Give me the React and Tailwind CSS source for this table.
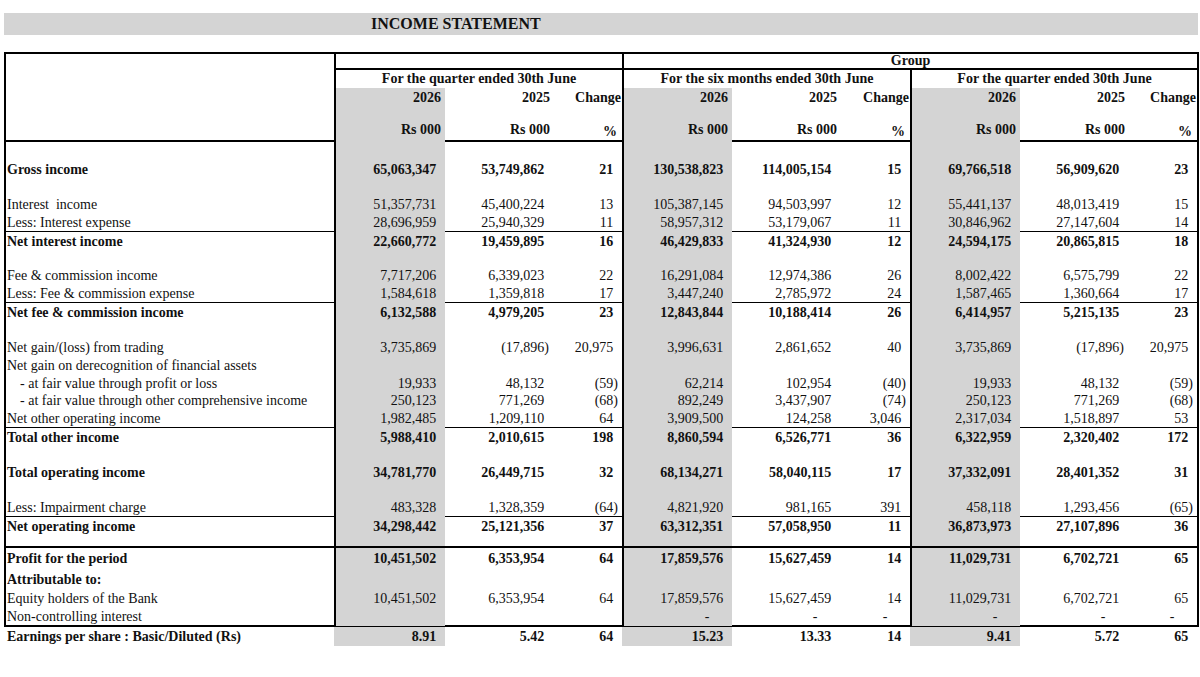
import React from "react";

const COLS =
  "grid grid-cols-[328px_111px_108px_69px_110px_108px_70px_110px_108px_69px]";

const rows = [
  { h: "h-[18px] leading-[18px]" },
  {
    h: "h-[18px] leading-[18px]",
    label: "Gross income",
    bold: true,
    v: ["65,063,347", "53,749,862", "21", "130,538,823", "114,005,154", "15", "69,766,518", "56,909,620", "23"],
  },
  { h: "h-[17px] leading-[17px]" },
  {
    h: "h-[18px] leading-[18px]",
    label: "Interest  income",
    v: ["51,357,731", "45,400,224", "13", "105,387,145", "94,503,997", "12", "55,441,137", "48,013,419", "15"],
  },
  {
    h: "h-[18px] leading-[18px]",
    label: "Less: Interest expense",
    v: ["28,696,959", "25,940,329", "11", "58,957,312", "53,179,067", "11", "30,846,962", "27,147,604", "14"],
  },
  {
    h: "h-[18px] leading-[17px]",
    line: "border-t border-black",
    label: "Net interest income",
    bold: true,
    v: ["22,660,772", "19,459,895", "16", "46,429,833", "41,324,930", "12", "24,594,175", "20,865,815", "18"],
  },
  { h: "h-[17px] leading-[17px]" },
  {
    h: "h-[18px] leading-[18px]",
    label: "Fee & commission income",
    v: ["7,717,206", "6,339,023", "22", "16,291,084", "12,974,386", "26", "8,002,422", "6,575,799", "22"],
  },
  {
    h: "h-[18px] leading-[18px]",
    label: "Less: Fee & commission expense",
    v: ["1,584,618", "1,359,818", "17", "3,447,240", "2,785,972", "24", "1,587,465", "1,360,664", "17"],
  },
  {
    h: "h-[19px] leading-[18px]",
    line: "border-t border-black",
    label: "Net fee & commission income",
    bold: true,
    v: ["6,132,588", "4,979,205", "23", "12,843,844", "10,188,414", "26", "6,414,957", "5,215,135", "23"],
  },
  { h: "h-[17px] leading-[17px]" },
  {
    h: "h-[18px] leading-[18px]",
    label: "Net gain/(loss) from trading",
    v: ["3,735,869", "(17,896)", "20,975", "3,996,631", "2,861,652", "40", "3,735,869", "(17,896)", "20,975"],
  },
  {
    h: "h-[18px] leading-[18px]",
    label: "Net gain on derecognition of financial assets",
  },
  {
    h: "h-[17px] leading-[17px]",
    label: "- at fair value through profit or loss",
    indent: true,
    v: ["19,933", "48,132", "(59)", "62,214", "102,954", "(40)", "19,933", "48,132", "(59)"],
  },
  {
    h: "h-[18px] leading-[18px]",
    label: "- at fair value through other comprehensive income",
    indent: true,
    v: ["250,123", "771,269", "(68)", "892,249", "3,437,907", "(74)", "250,123", "771,269", "(68)"],
  },
  {
    h: "h-[18px] leading-[18px]",
    label: "Net other operating income",
    v: ["1,982,485", "1,209,110", "64", "3,909,500", "124,258", "3,046", "2,317,034", "1,518,897", "53"],
  },
  {
    h: "h-[18px] leading-[17px]",
    line: "border-t border-black",
    label: "Total other income",
    bold: true,
    v: ["5,988,410", "2,010,615", "198", "8,860,594", "6,526,771", "36", "6,322,959", "2,320,402", "172"],
  },
  { h: "h-[18px] leading-[18px]" },
  {
    h: "h-[18px] leading-[18px]",
    label: "Total operating income",
    bold: true,
    v: ["34,781,770", "26,449,715", "32", "68,134,271", "58,040,115", "17", "37,332,091", "28,401,352", "31"],
  },
  { h: "h-[17px] leading-[17px]" },
  {
    h: "h-[18px] leading-[18px]",
    label: "Less: Impairment charge",
    v: ["483,328", "1,328,359", "(64)", "4,821,920", "981,165", "391", "458,118", "1,293,456", "(65)"],
  },
  {
    h: "h-[18px] leading-[17px]",
    line: "border-t border-black",
    label: "Net operating income",
    bold: true,
    v: ["34,298,442", "25,121,356", "37", "63,312,351", "57,058,950", "11", "36,873,973", "27,107,896", "36"],
  },
  { h: "h-[12px] leading-[12px]" },
  {
    h: "h-[22px] leading-[20px]",
    line: "border-t-2 border-black",
    label: "Profit for the period",
    bold: true,
    v: ["10,451,502", "6,353,954", "64", "17,859,576", "15,627,459", "14", "11,029,731", "6,702,721", "65"],
  },
  { h: "h-[21px] leading-[21px]", label: "Attributable to:", bold: true },
  {
    h: "h-[18px] leading-[18px]",
    label: "Equity holders of the Bank",
    v: ["10,451,502", "6,353,954", "64", "17,859,576", "15,627,459", "14", "11,029,731", "6,702,721", "65"],
  },
  {
    h: "h-[18px] leading-[18px]",
    label: "Non-controlling interest",
    v: ["", "", "", "-", "-", "-", "-", "-", "-"],
  },
];

const eps = {
  h: "h-[18px] leading-[18px]",
  label: "Earnings per share : Basic/Diluted (Rs)",
  bold: true,
  v: ["8.91", "5.42", "64", "15.23", "13.33", "14", "9.41", "5.72", "65"],
};

// accounting format: positives keep room for ")" and dashes sit left of it
const fmt = (val) => {
  if (!val) return null;
  if (val === "-")
    return (
      <>
        -<span className="invisible">00)</span>
      </>
    );
  if (val.startsWith("(")) return val;
  return (
    <>
      {val}
      <span className="invisible">)</span>
    </>
  );
};

const Row = ({ row, open }) => (
  <div className={`${COLS} ${row.h} ${row.line || ""} ${row.bold ? "font-bold" : ""}`}>
    <div className={`whitespace-pre pt-[1px] ${row.indent ? "pl-[14px]" : "pl-[1px]"}`}>{row.label}</div>
    {[0, 1, 2, 3, 4, 5, 6, 7, 8].map((i) => (
      <div
        key={i}
        className={`text-right pr-[4px] pt-[1px] whitespace-nowrap ${
          i % 3 === 0 ? "bg-[#d4d4d4]" : ""
        } ${i % 3 === 0 && !open ? "border-l-2 border-black" : ""}`}
      >
        {fmt(row.v?.[i])}
      </div>
    ))}
  </div>
);

const PeriodHeader = ({ title }) => (
  <div className="col-span-3 border-l-2 border-black text-center font-bold">{title}</div>
);

export default function App() {
  return (
    <div className="w-[1200px] h-[677px] bg-white text-[#111] font-['Liberation_Serif',serif] text-[14px] overflow-hidden">
      <div className="mt-[13px] ml-[4px] w-[1194px] h-[22px] bg-[#d4d4d4] pl-[367px] font-bold text-[16px] leading-[22px]">
        INCOME STATEMENT
      </div>

      <div className="mt-[17px] ml-[4px] w-[1195px] border-2 border-black">
        {/* header */}
        <div className="grid grid-cols-[328px_288px_575px] h-[16px] leading-[14px]">
          <div />
          <div className="border-l-2 border-b-2 border-black" />
          <div className="border-l-2 border-b-2 border-black text-center font-bold">Group</div>
        </div>
        <div className={`${COLS} h-[18px] leading-[18px]`}>
          <div />
          <PeriodHeader title="For the quarter ended 30th June" />
          <PeriodHeader title="For the six months ended 30th June" />
          <PeriodHeader title="For the quarter ended 30th June" />
        </div>
        <div className={`${COLS} h-[19px] leading-[19px] font-bold`}>
          <div />
          {[0, 1, 2].map((g) => (
            <React.Fragment key={g}>
              <div className="border-l-2 border-black bg-[#d4d4d4] text-right pr-[4px]">2026</div>
              <div className="text-right pr-[3px]">2025</div>
              <div className="text-right pr-[1px]">Change</div>
            </React.Fragment>
          ))}
        </div>
        <div className={`${COLS} h-[13px]`}>
          <div />
          {[0, 1, 2].map((g) => (
            <React.Fragment key={g}>
              <div className="border-l-2 border-black bg-[#d4d4d4]" />
              <div />
              <div />
            </React.Fragment>
          ))}
        </div>
        <div className={`${COLS} h-[22px] leading-[20px] font-bold border-b-2 border-black`}>
          <div />
          {[0, 1, 2].map((g) => (
            <React.Fragment key={g}>
              <div className="border-l-2 border-black bg-[#d4d4d4] text-right pr-[4px]">Rs 000</div>
              <div className="text-right pr-[3px]">Rs 000</div>
              <div className="text-right pr-[5px] pt-[2px]">%</div>
            </React.Fragment>
          ))}
        </div>

        {/* body */}
        {rows.map((row, idx) => (
          <Row key={idx} row={row} />
        ))}
      </div>

      <div className="ml-[6px]">
        <Row row={eps} open />
      </div>
    </div>
  );
}
